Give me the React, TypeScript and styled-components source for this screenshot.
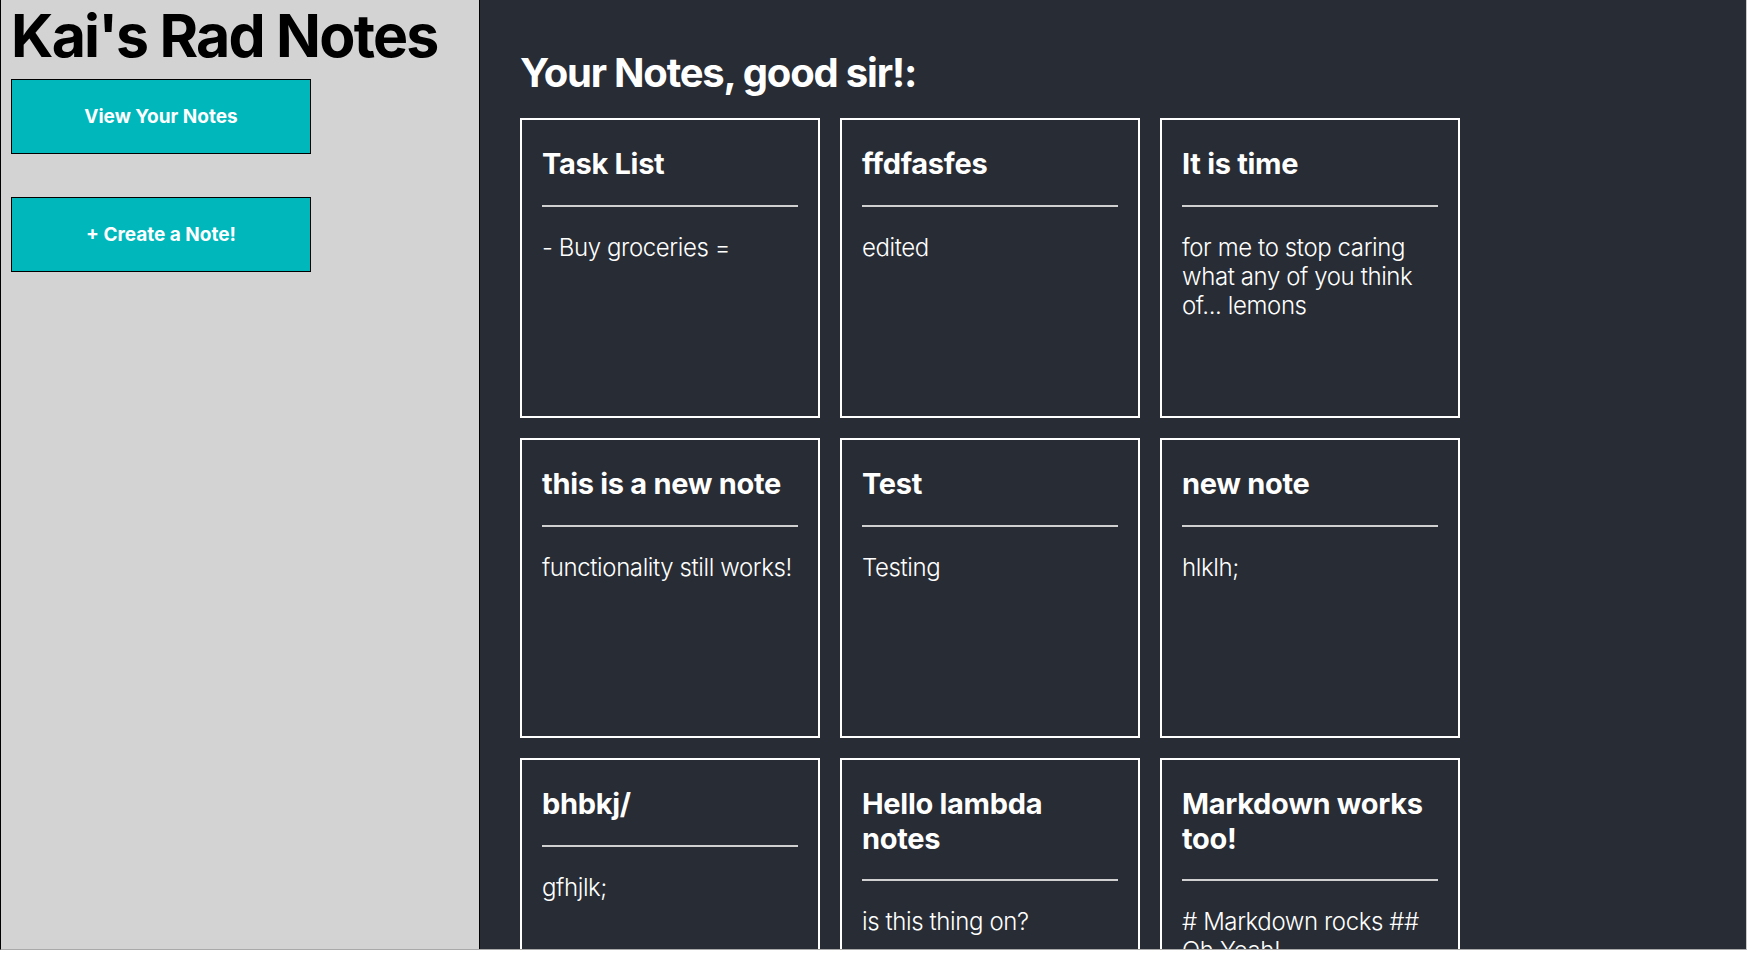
import React from "react";
import styled, { createGlobalStyle } from "styled-components";

const GlobalStyle = createGlobalStyle`
    html, body {
        margin: 0;
        padding: 0;
        background: #ffffff;
        overflow: hidden;
    }
    * {
        box-sizing: border-box;
    }
`;

interface INote {
    id: number;
    title: string;
    body: string;
}

const notes: INote[] = [
    { id: 1, title: "Task List", body: "- Buy groceries =" },
    { id: 2, title: "ffdfasfes", body: "edited" },
    { id: 3, title: "It is time", body: "for me to stop caring what any of you think of... lemons" },
    { id: 4, title: "this is a new note", body: "functionality still works!" },
    { id: 5, title: "Test", body: "Testing" },
    { id: 6, title: "new note", body: "hlklh;" },
    { id: 7, title: "bhbkj/", body: "gfhjlk;" },
    { id: 8, title: "Hello lambda notes", body: "is this thing on?" },
    { id: 9, title: "Markdown works too!", body: "# Markdown rocks ## Oh Yeah!" },
];

const AppWrapper = styled.div`
    display: flex;
    width: 1747px;
    height: 950px;
    overflow: hidden;
    border-left: 1px solid #000;
    border-right: 1px solid #c8c8c8;
    border-bottom: 1px solid #a9a9a9;
    font-family: Inter, "Noto Sans", sans-serif;
`;

const Sidebar = styled.aside`
    width: 479px;
    flex-shrink: 0;
    background: #d3d3d3;
    border-right: 1px solid #000;
    padding: 0 10px;
    display: flex;
    flex-direction: column;
`;

const Logo = styled.h1`
    margin: 0 0 8px;
    font-size: 59px;
    font-weight: 700;
    line-height: 1.21;
    letter-spacing: -1.8px;
    color: #000;
`;

const SideButton = styled.button`
    width: 300px;
    height: 75px;
    margin-bottom: 43px;
    background: #00b7bc;
    border: 1px solid #000;
    color: #fff;
    font-family: Inter, "Noto Sans", sans-serif;
    font-size: 19px;
    font-weight: 700;
    cursor: pointer;
`;

const Main = styled.main`
    flex: 1;
    background: #282c34;
    padding: 49px 40px 0;
    overflow: hidden;
`;

const Heading = styled.h2`
    margin: 0 0 21px;
    font-size: 40px;
    font-weight: 700;
    line-height: 1.21;
    letter-spacing: -1.2px;
    color: #fff;
`;

const NotesGrid = styled.section`
    display: grid;
    grid-template-columns: repeat(3, 300px);
    grid-auto-rows: 300px;
    gap: 20px;
`;

const Card = styled.div`
    border: 2px solid #fff;
    padding: 27px 20px 20px;
    color: #fff;
    overflow: hidden;
`;

const CardTitle = styled.h3`
    margin: 0;
    padding-bottom: 23px;
    border-bottom: 2px solid #d0d0d0;
    font-size: 29px;
    font-weight: 700;
    line-height: 1.19;
    letter-spacing: -0.3px;
`;

const CardBody = styled.p`
    margin: 26px 0 0;
    font-size: 24px;
    font-weight: 300;
    line-height: 29px;
    letter-spacing: -0.4px;
`;

const App: React.FC = () => {
    return (
        <>
            <GlobalStyle />
            <AppWrapper>
                <Sidebar>
                    <Logo>Kai's Rad Notes</Logo>
                    <SideButton>View Your Notes</SideButton>
                    <SideButton>+ Create a Note!</SideButton>
                </Sidebar>
                <Main>
                    <Heading>Your Notes, good sir!:</Heading>
                    <NotesGrid>
                        {notes.map((note) => (
                            <Card key={note.id}>
                                <CardTitle>{note.title}</CardTitle>
                                <CardBody>{note.body}</CardBody>
                            </Card>
                        ))}
                    </NotesGrid>
                </Main>
            </AppWrapper>
        </>
    );
};

export default App;
